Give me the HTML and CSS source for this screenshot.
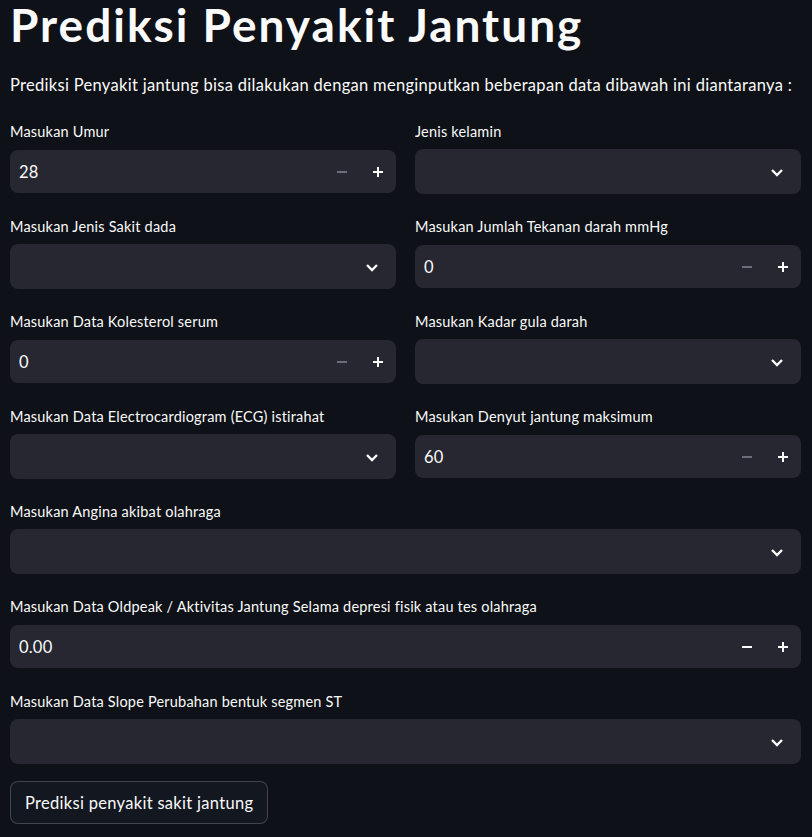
FILE: index.html
```html
<!DOCTYPE html>
<html lang="id">
<head>
<meta charset="utf-8">
<title>Prediksi Penyakit Jantung</title>
<link rel="stylesheet" href="styles.css">
</head>
<body>
<main class="main">
  <h1 class="title">Prediksi Penyakit Jantung</h1>
  <p class="intro">Prediksi Penyakit jantung bisa dilakukan dengan menginputkan beberapan data dibawah ini diantaranya :</p>

  <div class="row">
    <div class="field">
      <label class="label">Masukan Umur</label>
      <div class="box number">
        <span class="value">28</span>
        <span class="step disabled"><svg width="12" height="12" viewBox="0 0 12 12"><rect x="1" y="5" width="10" height="2" fill="currentColor"/></svg></span>
        <span class="step"><svg width="12" height="12" viewBox="0 0 12 12"><rect x="1" y="5" width="10" height="2" fill="currentColor"/><rect x="5" y="1" width="2" height="10" fill="currentColor"/></svg></span>
      </div>
    </div>
    <div class="field">
      <label class="label">Jenis kelamin</label>
      <div class="box select">
        <span class="value"></span>
        <span class="chev"><svg width="14" height="10" viewBox="0 0 14 10"><path d="M2 3 L7 8 L12 3" fill="none" stroke="currentColor" stroke-width="2.4"/></svg></span>
      </div>
    </div>
  </div>

  <div class="row">
    <div class="field">
      <label class="label">Masukan Jenis Sakit dada</label>
      <div class="box select">
        <span class="value"></span>
        <span class="chev"><svg width="14" height="10" viewBox="0 0 14 10"><path d="M2 3 L7 8 L12 3" fill="none" stroke="currentColor" stroke-width="2.4"/></svg></span>
      </div>
    </div>
    <div class="field">
      <label class="label">Masukan Jumlah Tekanan darah mmHg</label>
      <div class="box number">
        <span class="value">0</span>
        <span class="step disabled"><svg width="12" height="12" viewBox="0 0 12 12"><rect x="1" y="5" width="10" height="2" fill="currentColor"/></svg></span>
        <span class="step"><svg width="12" height="12" viewBox="0 0 12 12"><rect x="1" y="5" width="10" height="2" fill="currentColor"/><rect x="5" y="1" width="2" height="10" fill="currentColor"/></svg></span>
      </div>
    </div>
  </div>

  <div class="row">
    <div class="field">
      <label class="label">Masukan Data Kolesterol serum</label>
      <div class="box number">
        <span class="value">0</span>
        <span class="step disabled"><svg width="12" height="12" viewBox="0 0 12 12"><rect x="1" y="5" width="10" height="2" fill="currentColor"/></svg></span>
        <span class="step"><svg width="12" height="12" viewBox="0 0 12 12"><rect x="1" y="5" width="10" height="2" fill="currentColor"/><rect x="5" y="1" width="2" height="10" fill="currentColor"/></svg></span>
      </div>
    </div>
    <div class="field">
      <label class="label">Masukan Kadar gula darah</label>
      <div class="box select">
        <span class="value"></span>
        <span class="chev"><svg width="14" height="10" viewBox="0 0 14 10"><path d="M2 3 L7 8 L12 3" fill="none" stroke="currentColor" stroke-width="2.4"/></svg></span>
      </div>
    </div>
  </div>

  <div class="row">
    <div class="field">
      <label class="label">Masukan Data Electrocardiogram (ECG) istirahat</label>
      <div class="box select">
        <span class="value"></span>
        <span class="chev"><svg width="14" height="10" viewBox="0 0 14 10"><path d="M2 3 L7 8 L12 3" fill="none" stroke="currentColor" stroke-width="2.4"/></svg></span>
      </div>
    </div>
    <div class="field">
      <label class="label">Masukan Denyut jantung maksimum</label>
      <div class="box number">
        <span class="value">60</span>
        <span class="step disabled"><svg width="12" height="12" viewBox="0 0 12 12"><rect x="1" y="5" width="10" height="2" fill="currentColor"/></svg></span>
        <span class="step"><svg width="12" height="12" viewBox="0 0 12 12"><rect x="1" y="5" width="10" height="2" fill="currentColor"/><rect x="5" y="1" width="2" height="10" fill="currentColor"/></svg></span>
      </div>
    </div>
  </div>

  <div class="row">
    <div class="field">
      <label class="label">Masukan Angina akibat olahraga</label>
      <div class="box select">
        <span class="value"></span>
        <span class="chev"><svg width="14" height="10" viewBox="0 0 14 10"><path d="M2 3 L7 8 L12 3" fill="none" stroke="currentColor" stroke-width="2.4"/></svg></span>
      </div>
    </div>
  </div>

  <div class="row">
    <div class="field">
      <label class="label">Masukan Data Oldpeak / Aktivitas Jantung Selama depresi fisik atau tes olahraga</label>
      <div class="box number">
        <span class="value">0.00</span>
        <span class="step"><svg width="12" height="12" viewBox="0 0 12 12"><rect x="1" y="5" width="10" height="2" fill="currentColor"/></svg></span>
        <span class="step"><svg width="12" height="12" viewBox="0 0 12 12"><rect x="1" y="5" width="10" height="2" fill="currentColor"/><rect x="5" y="1" width="2" height="10" fill="currentColor"/></svg></span>
      </div>
    </div>
  </div>

  <div class="row">
    <div class="field">
      <label class="label">Masukan Data Slope Perubahan bentuk segmen ST</label>
      <div class="box select">
        <span class="value"></span>
        <span class="chev"><svg width="14" height="10" viewBox="0 0 14 10"><path d="M2 3 L7 8 L12 3" fill="none" stroke="currentColor" stroke-width="2.4"/></svg></span>
      </div>
    </div>
  </div>

  <div class="actions">
    <button class="btn" type="button">Prediksi penyakit sakit jantung</button>
  </div>
</main>
</body>
</html>
```

FILE: styles.css
```css
html, body {
  margin: 0;
  padding: 0;
  background: #0e1117;
  color: #fafafa;
  font-family: Lato, "Noto Sans", sans-serif;
}

.main {
  width: 791px;
  margin-left: 10px;
  display: flex;
  flex-direction: column;
}

.title {
  margin: 0;
  font-size: 46px;
  line-height: 50px;
  font-weight: 700;
  letter-spacing: 2px;
  white-space: nowrap;
}

.intro {
  margin: 23px 0 0 0;
  font-size: 16.5px;
  line-height: 24px;
  letter-spacing: 0.3px;
  white-space: nowrap;
}

.row {
  display: flex;
  gap: 19px;
  margin-top: 23px;
}

.intro + .row {
  margin-top: 24px;
}

.field {
  flex: 1 1 0;
  min-width: 0;
  display: flex;
  flex-direction: column;
}

.label {
  font-size: 14.5px;
  line-height: 21px;
  letter-spacing: 0.2px;
  margin-bottom: 8px;
  white-space: nowrap;
}

.box {
  background: #262730;
  border-radius: 8px;
  display: flex;
  align-items: center;
  height: 43px;
}

.box.select {
  height: 45px;
  margin: -1px 0;
}

.value {
  flex: 1 1 auto;
  padding-left: 9px;
  font-size: 16.5px;
  letter-spacing: 0.2px;
}

.step {
  width: 36px;
  height: 100%;
  display: flex;
  align-items: center;
  justify-content: center;
  color: #fafafa;
}

.step.disabled {
  color: #6b6d7c;
}

.chev {
  width: 48px;
  display: flex;
  align-items: center;
  justify-content: center;
  color: #fafafa;
}

.actions {
  margin-top: 18px;
}

.btn {
  font-family: inherit;
  font-size: 16.5px;
  letter-spacing: 0.3px;
  color: #fafafa;
  background: #131720;
  border: 1px solid rgba(250, 250, 250, 0.2);
  border-radius: 8px;
  height: 43px;
  padding: 0 14px;
}
```
